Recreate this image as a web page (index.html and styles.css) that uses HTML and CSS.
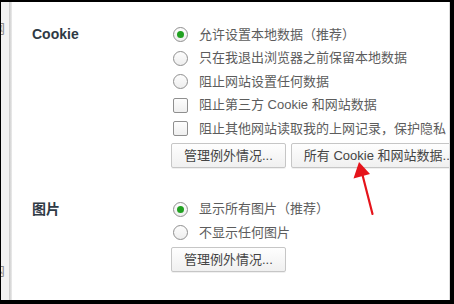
FILE: index.html
```html
<!DOCTYPE html>
<html lang="zh-CN">
<head>
<meta charset="utf-8">
<title>内容设置</title>
<link rel="stylesheet" href="styles.css">
</head>
<body>
<div class="screen">
  <div class="gutter">
    <span class="frag">网</span>
    <span class="frag">内</span>
  </div>
  <div class="edge"></div>
  <div class="content">
    <section class="setting">
      <div class="label">Cookie</div>
      <div class="options">
        <div class="opt"><span class="radio checked"></span><span class="txt">允许设置本地数据（推荐）</span></div>
        <div class="opt"><span class="radio"></span><span class="txt">只在我退出浏览器之前保留本地数据</span></div>
        <div class="opt"><span class="radio"></span><span class="txt">阻止网站设置任何数据</span></div>
        <div class="opt"><span class="check"></span><span class="txt">阻止第三方 Cookie 和网站数据</span></div>
        <div class="opt"><span class="check"></span><span class="txt">阻止其他网站读取我的上网记录，保护隐私</span></div>
        <div class="buttons">
          <button class="btn">管理例外情况...</button>
          <button class="btn">所有 Cookie 和网站数据...</button>
        </div>
      </div>
    </section>
    <section class="setting setting-images">
      <div class="label">图片</div>
      <div class="options">
        <div class="opt"><span class="radio checked"></span><span class="txt">显示所有图片（推荐）</span></div>
        <div class="opt"><span class="radio"></span><span class="txt">不显示任何图片</span></div>
        <div class="buttons">
          <button class="btn">管理例外情况...</button>
        </div>
      </div>
    </section>
  </div>
</div>
<svg class="arrow" viewBox="0 0 454 304" width="454" height="304">
  <line x1="372.5" y1="214" x2="362" y2="173" stroke="#e5141b" stroke-width="2.2" stroke-linecap="round"/>
  <polygon points="359,162 353.5,178.5 370,174" fill="#e5141b"/>
</svg>
</body>
</html>
```

FILE: styles.css
```css
html, body {
  margin: 0;
  padding: 0;
}
body {
  background: #000;
  width: 454px;
  height: 304px;
  overflow: hidden;
  font-family: "Liberation Sans", "Noto Sans CJK SC", sans-serif;
}
.screen {
  margin: 2px 4px 0 1px;
  height: 298px;
  display: flex;
  background: #fff;
  overflow: hidden;
}
.gutter {
  width: 8px;
  flex: none;
  background: #f3f3f3;
  overflow: hidden;
  display: flex;
  flex-direction: column;
  justify-content: space-between;
  padding: 20px 0 22px;
  box-sizing: border-box;
}
.frag {
  display: block;
  margin-left: -9px;
  font-size: 13px;
  line-height: 14px;
  color: #8a8a8a;
  white-space: nowrap;
}
.edge {
  width: 3px;
  flex: none;
  background: linear-gradient(to right, #c9c9c9, #dcdcdc 60%, #ececec);
}
.content {
  flex: 1;
  min-width: 0;
  overflow: hidden;
  padding: 21px 0 0 20px;
  border-right: 1px solid #dedede;
}
.setting {
  display: grid;
  grid-template-columns: 139px auto;
}
.setting-images {
  margin-top: 30px;
}
.label {
  font-size: 14px;
  font-weight: bold;
  color: #2f3a45;
  line-height: 23.5px;
  height: 23.5px;
  white-space: nowrap;
}
.options {
  min-width: 0;
}
.opt {
  height: 23.5px;
  display: flex;
  align-items: center;
  white-space: nowrap;
}
.txt {
  font-size: 13px;
  color: #5c5c5c;
  line-height: 16px;
}
.radio {
  width: 13px;
  height: 13px;
  margin: 0 11px 0 2px;
  border: 1px solid #8f8f8f;
  border-radius: 50%;
  box-sizing: content-box;
  flex: none;
  display: flex;
  align-items: center;
  justify-content: center;
  background: linear-gradient(#fdfdfd, #eeeeee);
}
.radio.checked::after {
  content: "";
  width: 7px;
  height: 7px;
  border-radius: 50%;
  background: #21a121;
}
.check {
  width: 13px;
  height: 13px;
  margin: 0 11px 0 2px;
  border: 1px solid #8f8f8f;
  border-radius: 2px;
  flex: none;
  background: linear-gradient(#fdfdfd, #efefef);
}
.buttons {
  display: flex;
  gap: 5px;
  margin-top: 2px;
  white-space: nowrap;
}
.btn {
  flex: none;
  height: 25px;
  padding: 0 12px;
  font-family: "Liberation Sans", "Noto Sans CJK SC", sans-serif;
  font-size: 13px;
  color: #444;
  background: linear-gradient(#fefefe, #f0f0f0);
  border: 1px solid #c6c6c6;
  border-radius: 2px;
  box-shadow: 0 1px 0 rgba(0, 0, 0, 0.06);
  line-height: 23px;
  white-space: nowrap;
}
.arrow {
  position: absolute;
  left: 0;
  top: 0;
  pointer-events: none;
}
```
